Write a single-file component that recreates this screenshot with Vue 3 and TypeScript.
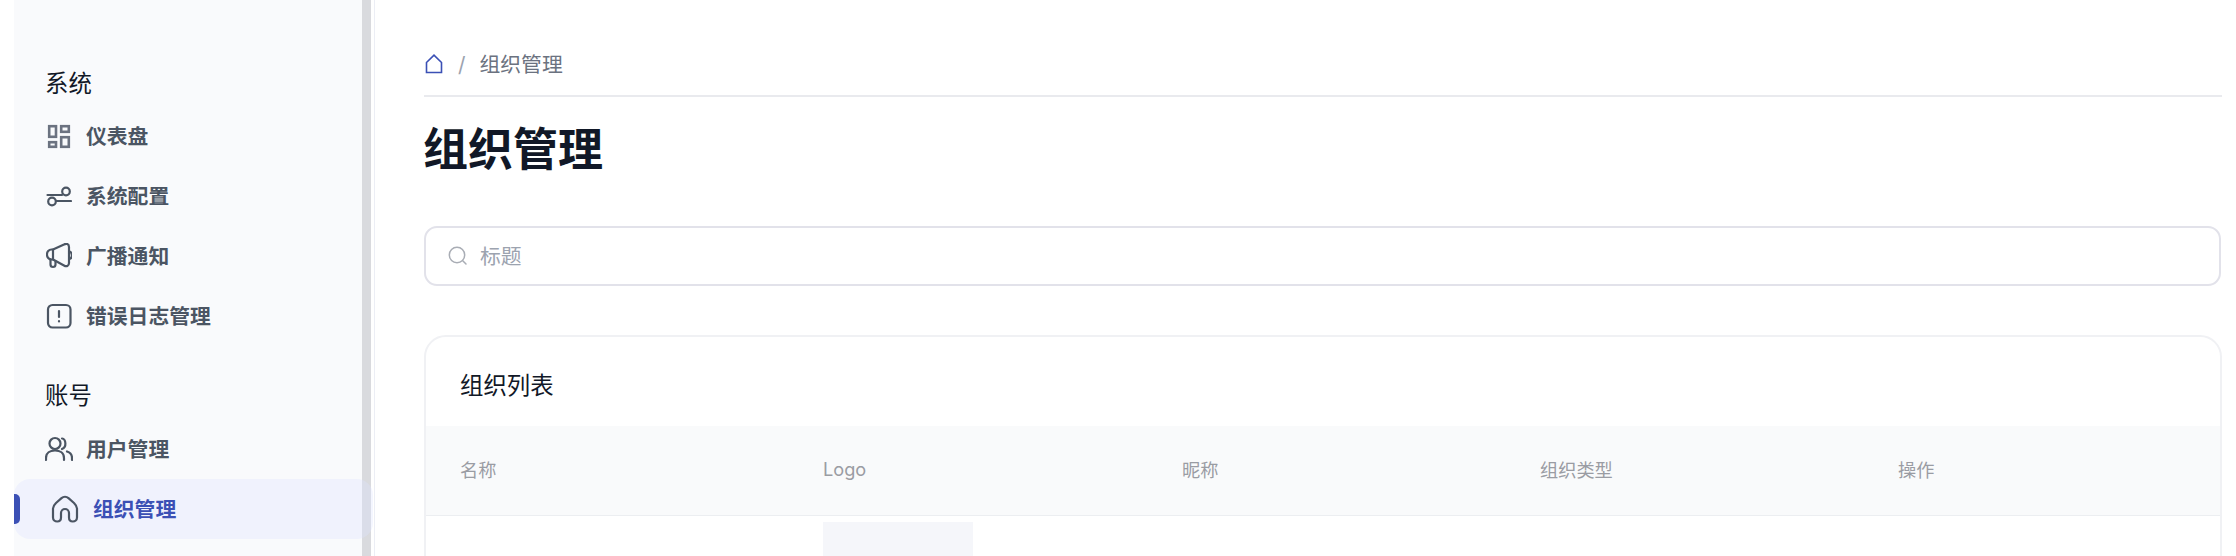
<script setup lang="ts">
const columns = ['名称', 'Logo', '昵称', '组织类型', '操作']
</script>

<template>
  <div class="layout">
    <aside class="sidebar">
      <div class="nav">
        <h3 class="group-title">系统</h3>
        <a class="item">
          <svg class="icon dash" viewBox="0 0 26 26">
            <rect x="3.2" y="3.2" width="6.8" height="10.6" />
            <rect x="15.2" y="3.2" width="7.6" height="5.6" />
            <rect x="3.2" y="19.2" width="6.8" height="4.6" />
            <rect x="15.2" y="14.2" width="7.6" height="9.6" />
          </svg>
          <span>仪表盘</span>
        </a>
        <a class="item">
          <svg class="icon" viewBox="0 0 26 26">
            <path d="M1.5 12H16" />
            <circle cx="20" cy="8.5" r="3.8" />
            <circle cx="6" cy="18.5" r="3.8" />
            <path d="M10 18H25" />
          </svg>
          <span>系统配置</span>
        </a>
        <a class="item">
          <svg class="icon" viewBox="0 0 26 26">
            <path d="M7 6.5H5.5A4.7 4.7 0 0 0 1 11.5 4.7 4.7 0 0 0 5.5 16.5H7L18 22.5C20.5 24 23 23 23 20V4C23 1 20.5 0 18 1.5Z" />
            <path d="M7 6.5V16.5" />
            <path d="M23.5 8.5C26.5 9.5 27 15 23.5 16" />
            <path d="M4.5 16.5V21.5A2.5 2.5 0 0 0 9.5 21.5V18" />
          </svg>
          <span>广播通知</span>
        </a>
        <a class="item">
          <svg class="icon" viewBox="0 0 26 26">
            <rect x="2" y="2" width="22.5" height="22.5" rx="4.5" />
            <path d="M13 8V14" />
            <path d="M13 18.2V18.4" />
          </svg>
          <span>错误日志管理</span>
        </a>

        <h3 class="group-title second">账号</h3>
        <a class="item">
          <svg class="icon users" viewBox="0 0 28 26">
            <circle cx="10" cy="7.5" r="5.5" />
            <path d="M1 24V22C1 17 5 14.5 10 14.5S19 17 19 22V24" />
            <path d="M17 2.5C21 3 22 11 17 13" />
            <path d="M22 15.5C25 16.5 27 19 27 22V24" />
          </svg>
          <span>用户管理</span>
        </a>
        <a class="item active">
          <svg class="icon home-arch" viewBox="0 0 28 28">
            <path d="M2 13.5C2 11.5 3 10 5 8L10.5 3.2C12.5 1.5 15.5 1.5 17.5 3.2L23 8C25 10 26 11.5 26 13.5V22.5C26 25 24 26.5 21.8 26.5 19.6 26.5 18 25 18 22.5V18A4 4 0 0 0 10 18V22.5C10 25 8.4 26.5 6.2 26.5 4 26.5 2 25 2 22.5Z" />
          </svg>
          <span>组织管理</span>
        </a>
      </div>
      <div class="scrollbar"></div>
    </aside>

    <main class="main">
      <nav class="crumbs">
        <svg class="crumb-home" viewBox="0 0 18 20">
          <path d="M1.5 8.5L9 1.2 16.5 8.5V18.5H1.5Z" />
        </svg>
        <span class="slash">/</span>
        <span class="crumb-text">组织管理</span>
      </nav>

      <h1 class="page-title">组织管理</h1>

      <div class="search">
        <svg class="search-icon" viewBox="0 0 20 20">
          <circle cx="9" cy="9" r="7.7" />
          <path d="M15 15L18 18" />
        </svg>
        <input class="search-input" type="text" placeholder="标题" />
      </div>

      <section class="card">
        <h2 class="card-title">组织列表</h2>
        <div class="table-head">
          <div v-for="col in columns" :key="col" class="cell">{{ col }}</div>
        </div>
        <div class="table-row">
          <div></div>
          <div class="logo-cell"><div class="logo-box"></div></div>
        </div>
      </section>
    </main>
  </div>
</template>

<style scoped>
.layout {
  display: flex;
  height: 556px;
  overflow: hidden;
  background: #fff;
  font-family: Inter, "Noto Sans CJK SC", sans-serif;
}

.sidebar {
  display: flex;
  flex: none;
  width: 360px;
  height: 100%;
  margin-left: 14px;
  border-right: 1px solid #eceef5;
}

.nav {
  flex: none;
  width: 348px;
  padding-top: 60px;
  background: #f9fafc;
  box-sizing: border-box;
}

.scrollbar {
  flex: none;
  width: 9px;
  background: #d9dade;
}

.group-title {
  display: flex;
  align-items: center;
  height: 46px;
  box-sizing: border-box;
  margin: 0;
  padding: 0 0 2px 31px;
  font-size: 23.4px;
  font-weight: 400;
  color: #111827;
}

.group-title.second {
  margin-top: 24px;
  height: 49px;
}

.item {
  display: flex;
  align-items: center;
  gap: 14px;
  height: 60px;
  padding-left: 32px;
  font-size: 20.8px;
  font-weight: 600;
  color: #4b5563;
}

.item span {
  margin-top: -2px;
}

.item.active {
  position: relative;
  width: 359px;
  box-sizing: border-box;
  padding-left: 37px;
  border-radius: 16px;
  background: rgba(222, 228, 255, 0.33);
  color: #3b50b5;
}

/* left marker of the selected row */
.item.active::before {
  content: '';
  position: absolute;
  left: 0;
  top: 15px;
  width: 6px;
  height: 30px;
  border-radius: 0 5px 5px 0;
  background: #3b50b5;
}

.icon {
  flex: none;
  width: 26px;
  height: 26px;
  fill: none;
  stroke: #4b5563;
  stroke-width: 2.2;
  stroke-linecap: round;
  stroke-linejoin: round;
}

.icon.dash {
  stroke: #6b7280;
  stroke-width: 2.6;
  stroke-linecap: butt;
  stroke-linejoin: miter;
}

.icon.users {
  width: 28px;
  margin: 0 -1px 0 -1px;
}

.home-arch {
  width: 28px;
  height: 28px;
}

.main {
  flex: 1;
  min-width: 0;
  padding: 0 14px 0 49px;
}

.crumbs {
  display: flex;
  align-items: center;
  height: 62px;
  padding-top: 33px;
  border-bottom: 2px solid #e9eaee;
}

.crumb-home {
  flex: none;
  width: 18px;
  height: 20px;
  margin-left: 1px;
  fill: none;
  stroke: #3b50b5;
  stroke-width: 1.6;
}

.slash {
  margin-left: 15px;
  font-size: 20.8px;
  color: #9ca3af;
}

.crumb-text {
  margin: -2px 0 0 14px;
  font-size: 20.8px;
  color: #6b7280;
}

.page-title {
  margin: 24px 0 0 -1px;
  height: 57px;
  line-height: 57px;
  font-size: 45px;
  font-weight: 700;
  color: #111827;
}

.search {
  display: flex;
  align-items: center;
  height: 60px;
  margin-top: 48px;
  margin-right: 1px;
  box-sizing: border-box;
  border: 2px solid #e2e2ea;
  border-radius: 13px;
  padding-left: 22px;
}

.search-icon {
  flex: none;
  width: 20px;
  height: 20px;
  fill: none;
  stroke: #a9adb5;
  stroke-width: 1.5;
  stroke-linecap: round;
}

.search-input {
  flex: 1;
  min-width: 0;
  margin-left: 12px;
  border: 0;
  outline: none;
  padding: 0;
  background: transparent;
  font-family: inherit;
  font-size: 20.8px;
}

.search-input::placeholder {
  color: #9ca3af;
}

.card {
  margin-top: 49px;
  box-sizing: border-box;
  height: 300px;
  border: 2px solid #f0f1f4;
  border-radius: 22px;
  overflow: hidden;
}

.card-title {
  display: flex;
  align-items: center;
  height: 89px;
  margin: 0;
  padding: 4px 0 0 34px;
  box-sizing: border-box;
  font-size: 23.4px;
  font-weight: 400;
  color: #111827;
}

.table-head,
.table-row {
  display: grid;
  grid-template-columns: 397px 359px 358px 358px 1fr;
}

.table-head {
  height: 89px;
  background: #f9fafb;
  border-bottom: 1px solid #eceef1;
}

.cell {
  display: flex;
  align-items: center;
  padding: 0 0 4px 34px;
  font-size: 18.2px;
  color: #9a9ca3;
}

.cell + .cell {
  padding-left: 0;
}

.table-row {
  padding-top: 6px;
}

.logo-box {
  width: 150px;
  height: 150px;
  background: #f5f6fa;
}
</style>

<style>
html,
body {
  margin: 0;
  overflow: hidden;
}
</style>
